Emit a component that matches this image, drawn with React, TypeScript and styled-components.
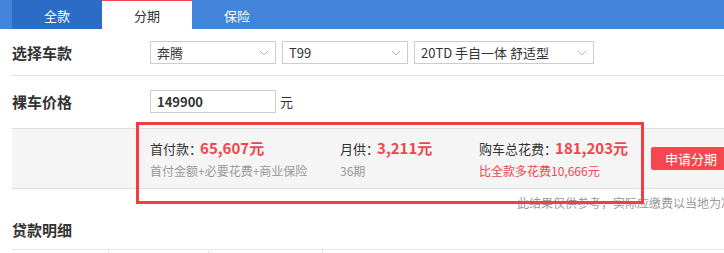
import React from 'react';
import styled, { createGlobalStyle } from 'styled-components';

const GlobalStyle = createGlobalStyle`
  body {
    margin: 0;
    overflow: hidden;
    background: #fff;
    font-family: "Noto Sans CJK SC", "Noto Sans", sans-serif;
    color: #333;
  }
`;

const Page = styled.div`
  position: relative;
  width: 733px;
`;

const TabBar = styled.div`
  display: flex;
  height: 29px;
  padding-left: 12px;
  background: #4184d9;
`;

const Tab = styled.div<{ $state: 'dark' | 'active' | 'normal' }>`
  width: 90px;
  box-sizing: border-box;
  display: flex;
  align-items: center;
  justify-content: center;
  font-size: 13px;
  color: ${({ $state }) => ($state === 'active' ? '#333' : '#fff')};
  background: ${({ $state }) =>
    $state === 'active' ? '#fff' : $state === 'dark' ? '#2a6cc6' : 'transparent'};
  border-top: 1px solid ${({ $state }) => ($state === 'active' ? '#f0464d' : 'transparent')};
`;

const Row = styled.div<{ $divider?: boolean }>`
  display: flex;
  align-items: flex-start;
  margin-left: 12px;
  padding: ${({ $divider }) => ($divider ? '12px 0 11px' : '14px 0 15px')};
  border-bottom: ${({ $divider }) => ($divider ? '1px solid #e2e2e2' : 'none')};
`;

const Label = styled.div`
  width: 138px;
  flex-shrink: 0;
  font-size: 15px;
  font-weight: bold;
  line-height: 23px;
  color: #333;
`;

const Selects = styled.div`
  display: flex;
  gap: 6px;
`;

const SelectBox = styled.div<{ $width: number }>`
  width: ${({ $width }) => $width}px;
  height: 23px;
  box-sizing: border-box;
  border: 1px solid #ccc;
  display: flex;
  align-items: center;
  justify-content: space-between;
  padding: 0 6px 0 6px;
  font-size: 13px;
  color: #333;
`;

const PriceInput = styled.div`
  width: 126px;
  height: 23px;
  box-sizing: border-box;
  border: 1px solid #ccc;
  padding-left: 6px;
  display: flex;
  align-items: center;
  font-size: 13px;
  font-weight: bold;
  color: #333;
`;

const Unit = styled.span`
  margin-left: 4px;
  font-size: 13px;
  line-height: 23px;
`;

const Summary = styled.div`
  display: flex;
  align-items: center;
  margin-left: 12px;
  height: 59px;
  padding-left: 138px;
  background: #f5f5f5;
  border-top: 1px solid #dedede;
  border-bottom: 1px solid #dedede;
`;

const Stat = styled.div<{ $width: number }>`
  width: ${({ $width }) => $width}px;
  flex-shrink: 0;
`;

const StatMain = styled.div`
  font-size: 13px;
  color: #333;
  line-height: 20px;
  white-space: nowrap;
`;

const Colon = styled.span`
  letter-spacing: -4px;
  margin-right: 2px;
`;

const StatValue = styled.span`
  font-size: 15px;
  font-weight: bold;
  color: #f0464d;
`;

const StatNote = styled.div<{ $red?: boolean }>`
  margin-top: 4px;
  font-size: 12px;
  line-height: 16px;
  color: ${({ $red }) => ($red ? '#f0464d' : '#999')};
  white-space: nowrap;
`;

const ApplyButton = styled.div`
  width: 80px;
  height: 23px;
  display: flex;
  align-items: center;
  justify-content: center;
  background: #f5474d;
  border-radius: 2px;
  color: #fff;
  font-size: 13px;
`;

const Disclaimer = styled.div`
  text-align: right;
  font-size: 12px;
  line-height: 16px;
  color: #999;
  padding-top: 6px;
  white-space: nowrap;
`;

const SectionTitle = styled.div`
  margin: 9px 0 0 12px;
  font-size: 15px;
  font-weight: bold;
  line-height: 20px;
  height: 29px;
`;

const DetailTable = styled.div`
  display: grid;
  grid-template-columns: 96px 100px 114px 1fr;
  margin-left: 12px;
  height: 4px;
  border-top: 1px solid #e5e5e5;
`;

const Cell = styled.div`
  border-left: 1px solid #e5e5e5;
  &:first-child {
    border-left: none;
  }
`;

const Highlight = styled.div`
  position: absolute;
  left: 136px;
  top: 122px;
  width: 508px;
  height: 82px;
  box-sizing: border-box;
  border: 3px solid #f73b43;
  pointer-events: none;
`;

const Chevron = () => (
  <svg width="10" height="6" viewBox="0 0 10 6">
    <path d="M1 1l4 4 4-4" fill="none" stroke="#b5b5b5" strokeWidth="1" />
  </svg>
);

export default function App() {
  return (
    <Page>
      <GlobalStyle />
      <TabBar>
        <Tab $state="dark">全款</Tab>
        <Tab $state="active">分期</Tab>
        <Tab $state="normal">保险</Tab>
      </TabBar>

      <Row $divider>
        <Label>选择车款</Label>
        <Selects>
          <SelectBox $width={126}>
            奔腾
            <Chevron />
          </SelectBox>
          <SelectBox $width={126}>
            T99
            <Chevron />
          </SelectBox>
          <SelectBox $width={180}>
            20TD 手自一体 舒适型
            <Chevron />
          </SelectBox>
        </Selects>
      </Row>

      <Row>
        <Label>裸车价格</Label>
        <PriceInput>149900</PriceInput>
        <Unit>元</Unit>
      </Row>

      <Summary>
        <Stat $width={190}>
          <StatMain>
            首付款<Colon>：</Colon>
            <StatValue>65,607元</StatValue>
          </StatMain>
          <StatNote>首付金额+必要花费+商业保险</StatNote>
        </Stat>
        <Stat $width={139}>
          <StatMain>
            月供<Colon>：</Colon>
            <StatValue>3,211元</StatValue>
          </StatMain>
          <StatNote>36期</StatNote>
        </Stat>
        <Stat $width={172}>
          <StatMain>
            购车总花费<Colon>：</Colon>
            <StatValue>181,203元</StatValue>
          </StatMain>
          <StatNote $red>比全款多花费10,666元</StatNote>
        </Stat>
        <ApplyButton>申请分期</ApplyButton>
      </Summary>

      <Disclaimer>此结果仅供参考，实际应缴费以当地为准</Disclaimer>

      <SectionTitle>贷款明细</SectionTitle>
      <DetailTable>
        <Cell />
        <Cell />
        <Cell />
        <Cell />
      </DetailTable>

      <Highlight />
    </Page>
  );
}
